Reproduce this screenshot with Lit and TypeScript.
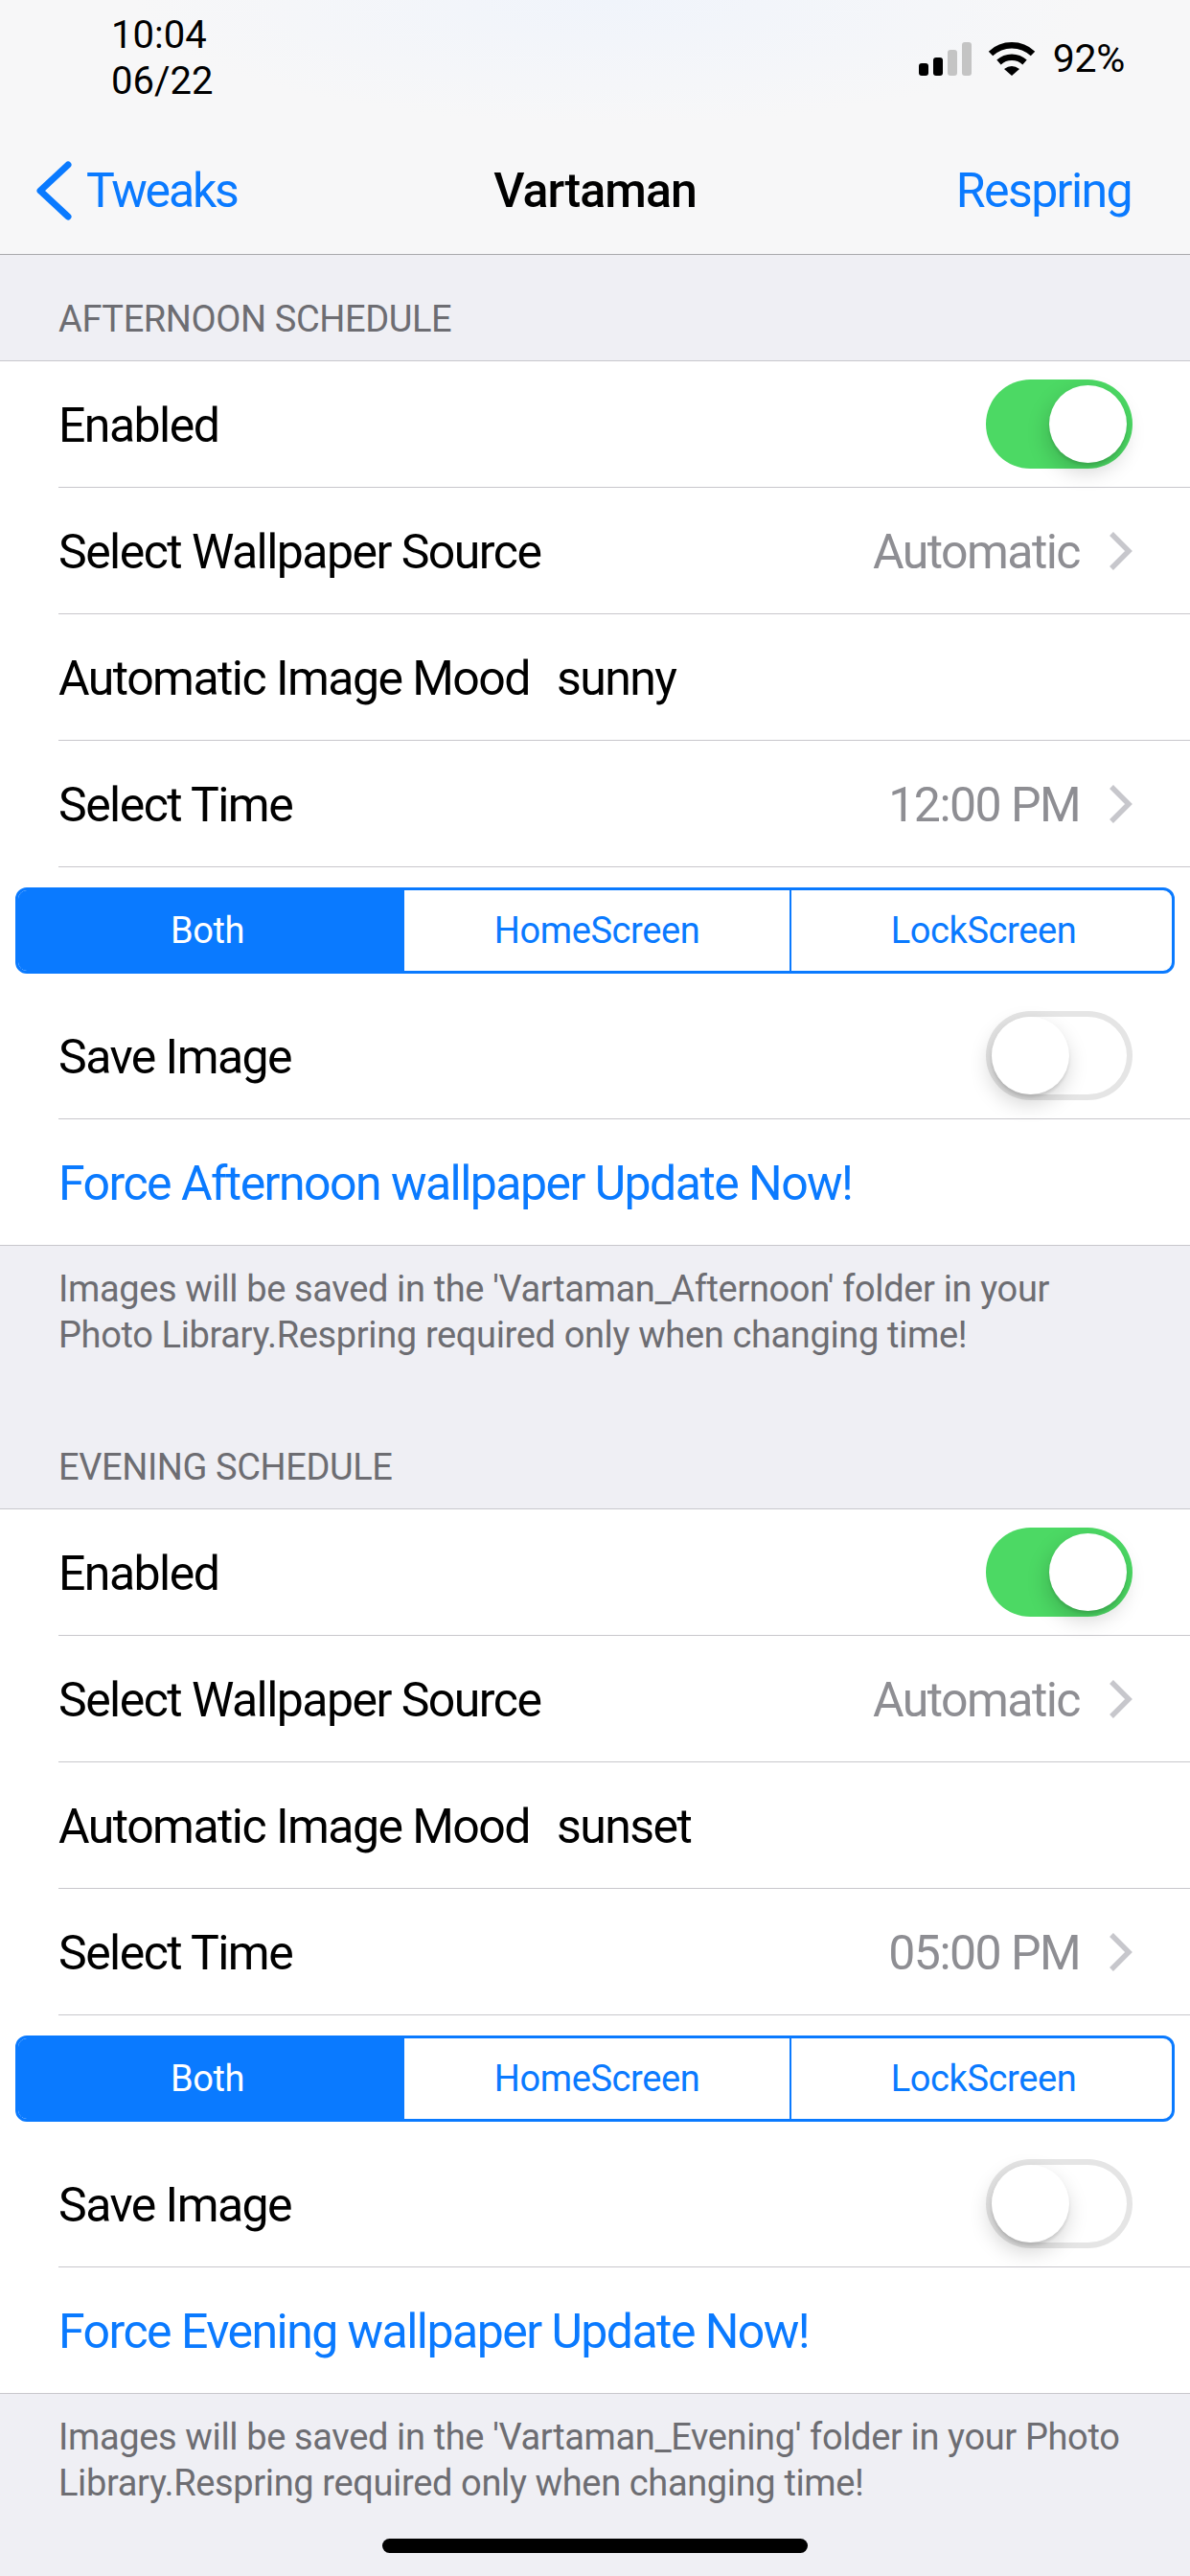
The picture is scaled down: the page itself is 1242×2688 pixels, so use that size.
import { LitElement, html, css } from "lit";
import { customElement } from "lit/decorators.js";

const SCHEDULES = [
  { title: "AFTERNOON SCHEDULE", mood: "sunny", time: "12:00 PM", name: "Afternoon",
    note: ["Images will be saved in the 'Vartaman_Afternoon' folder in your", "Photo Library.Respring required only when changing time!"] },
  { title: "EVENING SCHEDULE", mood: "sunset", time: "05:00 PM", name: "Evening",
    note: ["Images will be saved in the 'Vartaman_Evening' folder in your Photo", "Library.Respring required only when changing time!"] },
];

@customElement("app-root")
export class AppRoot extends LitElement {
  static styles = css`
    :host {
      display: block;
      position: relative;
      height: 2688px;
      overflow: hidden;
      background: #efeff4;
      color: #000;
      font-family: Roboto, "Liberation Sans", sans-serif;
    }
    .top {
      background: radial-gradient(ellipse 500px 130px at 640px 0, #f0f4fb, transparent), #f7f7f8;
      border-bottom: 1px solid #a9a9ac;
      height: 265px;
    }
    .status {
      height: 132px;
      box-sizing: border-box;
      display: flex;
      justify-content: space-between;
      padding: 13px 68px 0 116px;
    }
    .clock {
      font-size: 40px;
      line-height: 48px;
    }
    .indicators {
      display: flex;
      align-items: center;
      height: 96px;
      font-size: 41px;
      letter-spacing: -0.3px;
    }
    .signal { margin-right: 17px; }
    .wifi { margin-right: 18px; }
    .nav {
      height: 133px;
      display: grid;
      grid-template-columns: 1fr auto 1fr;
      align-items: center;
      font-size: 50px;
      letter-spacing: -1.6px;
      padding: 0 36px;
    }
    .back {
      display: flex;
      align-items: center;
      gap: 15px;
      color: #0a7aff;
      letter-spacing: -2.2px;
    }
    .title {
      font-weight: 500;
      letter-spacing: -0.9px;
    }
    .action {
      color: #0a7aff;
      text-align: right;
      padding-right: 25px;
    }
    .header {
      height: 110px;
      box-sizing: border-box;
      display: flex;
      align-items: flex-end;
      padding: 0 61px 19px;
      font-size: 38px;
      line-height: 48px;
      letter-spacing: -0.4px;
      color: #6d6d72;
    }
    .group {
      background: #fff;
      border-top: 1px solid #c8c7cc;
      border-bottom: 1px solid #c8c7cc;
    }
    .row {
      padding-left: 61px;
      font-size: 50px;
      letter-spacing: -1.55px;
    }
    .row-in {
      height: 131px;
      display: flex;
      align-items: center;
      padding-right: 60px;
      border-bottom: 1px solid #c8c7cc;
    }
    .row-in span { padding-top: 2px; }
    .row:last-child .row-in { border-bottom: 0; }
    .grow { flex: 1; }
    .value {
      color: #8e8e93;
      margin-right: 31px;
    }
    .mood { margin-left: 28px; }
    .link { color: #0a7aff; }
    .seg-row {
      height: 131px;
      box-sizing: border-box;
      padding: 21px 16px 0;
    }
    .seg {
      display: grid;
      grid-template-columns: 401px 404px 1fr;
      height: 90px;
      box-sizing: border-box;
      border: 3px solid #0a7aff;
      border-radius: 12px;
      overflow: hidden;
      font-size: 38px;
      letter-spacing: -0.4px;
      color: #0a7aff;
    }
    .seg div {
      display: flex;
      align-items: center;
      justify-content: center;
    }
    .seg div + div { border-left: 2px solid #0a7aff; }
    .seg div:last-child { padding-left: 4px; }
    .seg .on {
      background: #0a7aff;
      color: #fff;
      padding-right: 6px;
    }
    .switch {
      width: 153px;
      height: 93px;
      box-sizing: border-box;
      border-radius: 47px;
      padding: 6px;
      display: flex;
      box-shadow: inset 0 0 0 6px #e5e5e5;
    }
    .switch.off { background: #fff; }
    .switch.on {
      background: #4cd964;
      box-shadow: none;
      justify-content: flex-end;
    }
    .knob {
      width: 81px;
      height: 81px;
      border-radius: 50%;
      background: #fff;
      box-shadow: -2px 9px 22px rgba(0, 0, 0, 0.18), 0 3px 3px rgba(0, 0, 0, 0.1);
    }
    .footer {
      padding: 21px 61px 0;
      margin-bottom: 47px;
      font-size: 38px;
      line-height: 48px;
      letter-spacing: -0.36px;
      color: #6d6d72;
    }
    .footer div { white-space: nowrap; }
    .home {
      position: absolute;
      left: 399px;
      top: 2649px;
      width: 444px;
      height: 15px;
      border-radius: 8px;
      background: #000;
    }
  `;

  renderSwitch(on: boolean) {
    return html`<div class="switch ${on ? "on" : "off"}"><div class="knob"></div></div>`;
  }

  renderChevron() {
    return html`<svg width="24" height="40" viewBox="0 0 24 40" fill="none" stroke="#c7c7cc" stroke-width="5.5">
      <path d="M2 2 L20 20 L2 38" />
    </svg>`;
  }

  renderSchedule(s: (typeof SCHEDULES)[number]) {
    return html`
      <div class="header">${s.title}</div>
      <div class="group">
        <div class="row"><div class="row-in"><span class="grow">Enabled</span>${this.renderSwitch(true)}</div></div>
        <div class="row"><div class="row-in"><span class="grow">Select Wallpaper Source</span><span class="value">Automatic</span>${this.renderChevron()}</div></div>
        <div class="row"><div class="row-in"><span>Automatic Image Mood</span><span class="mood">${s.mood}</span></div></div>
        <div class="row"><div class="row-in"><span class="grow">Select Time</span><span class="value">${s.time}</span>${this.renderChevron()}</div></div>
        <div class="seg-row">
          <div class="seg"><div class="on">Both</div><div>HomeScreen</div><div>LockScreen</div></div>
        </div>
        <div class="row"><div class="row-in"><span class="grow">Save Image</span>${this.renderSwitch(false)}</div></div>
        <div class="row"><div class="row-in"><span class="link">Force ${s.name} wallpaper Update Now!</span></div></div>
      </div>
      <div class="footer">${s.note.map((line) => html`<div>${line}</div>`)}</div>
    `;
  }

  render() {
    return html`
      <div class="top">
        <div class="status">
          <div class="clock">10:04<br />06/22</div>
          <div class="indicators">
            <svg class="signal" width="55" height="35" viewBox="0 0 55 35">
              <rect x="0" y="22" width="10" height="13" rx="3" fill="#000" />
              <rect x="15" y="16" width="10" height="19" rx="3" fill="#000" />
              <rect x="30" y="8" width="10" height="27" rx="3" fill="#c4c4c4" />
              <rect x="45" y="0" width="10" height="35" rx="3" fill="#c4c4c4" />
            </svg>
            <svg class="wifi" width="50" height="36" viewBox="0 0 50 36" fill="none" stroke="#000" stroke-width="6.5">
              <path d="M3 13 A32 32 0 0 1 47 13" />
              <path d="M11.5 22 A20 20 0 0 1 38.5 22" />
              <path d="M17 29 Q25 23 33 29 L25 36 Z" fill="#000" stroke="none" />
            </svg>
            <span>92%</span>
          </div>
        </div>
        <div class="nav">
          <div class="back">
            <svg width="39" height="64" viewBox="0 0 39 64" fill="none" stroke="#0a7aff" stroke-width="7" stroke-linecap="round" stroke-linejoin="round">
              <path d="M35 5 L6 32 L35 59" />
            </svg>
            <span>Tweaks</span>
          </div>
          <div class="title">Vartaman</div>
          <div class="action">Respring</div>
        </div>
      </div>
      ${SCHEDULES.map((s) => this.renderSchedule(s))}
      <div class="home"></div>
    `;
  }
}
